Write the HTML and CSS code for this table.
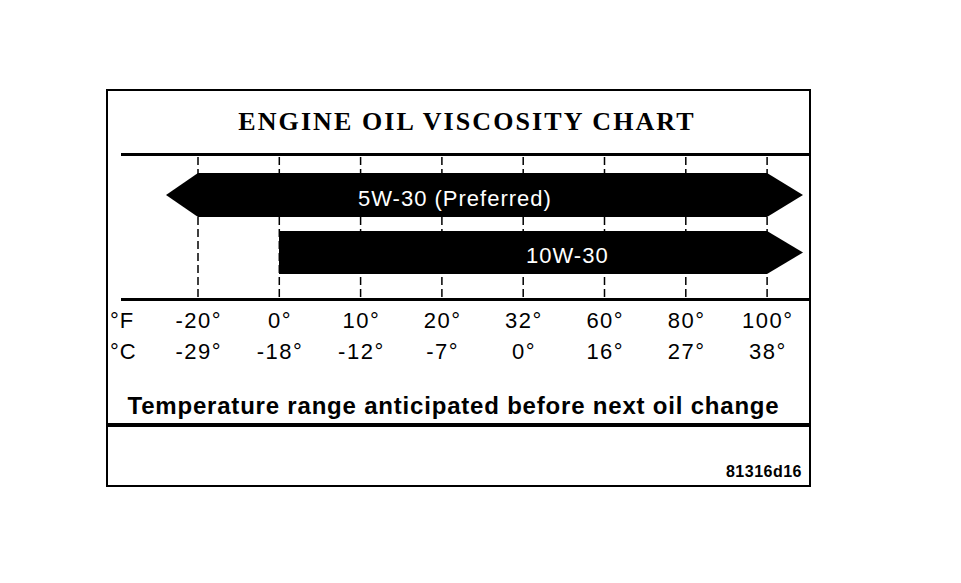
FILE: index.html
```html
<!DOCTYPE html>
<html lang="en">
<head>
<meta charset="utf-8">
<title>Engine Oil Viscosity Chart</title>
<link rel="stylesheet" href="styles.css">
</head>
<body>
<div class="chart">
  <h1 class="title">ENGINE OIL VISCOSITY CHART</h1>
  <div class="rule"></div>
  <svg class="bars" width="701" height="142" viewBox="0 0 701 142" xmlns="http://www.w3.org/2000/svg">
    <g class="ticks">
      <line x1="90" y1="1" x2="90" y2="142"/>
      <line x1="171.3" y1="1" x2="171.3" y2="142"/>
      <line x1="252.6" y1="1" x2="252.6" y2="142"/>
      <line x1="333.9" y1="1" x2="333.9" y2="142"/>
      <line x1="415.2" y1="1" x2="415.2" y2="142"/>
      <line x1="496.5" y1="1" x2="496.5" y2="142"/>
      <line x1="577.8" y1="1" x2="577.8" y2="142"/>
      <line x1="659.1" y1="1" x2="659.1" y2="142"/>
    </g>
    <polygon class="bar" points="58,39 90,17 659,17 695,39 659,61 90,61"/>
    <polygon class="bar" points="171,75 659,75 695,96.5 659,118 171,118"/>
    <text class="bar-label" x="250" y="50">5W-30 (Preferred)</text>
    <text class="bar-label" x="418" y="107">10W-30</text>
  </svg>
  <div class="rule"></div>
  <div class="scale">
    <div class="unit">°F</div>
    <div class="val">-20°</div>
    <div class="val">0°</div>
    <div class="val">10°</div>
    <div class="val">20°</div>
    <div class="val">32°</div>
    <div class="val">60°</div>
    <div class="val">80°</div>
    <div class="val">100°</div>
    <div class="unit">°C</div>
    <div class="val">-29°</div>
    <div class="val">-18°</div>
    <div class="val">-12°</div>
    <div class="val">-7°</div>
    <div class="val">0°</div>
    <div class="val">16°</div>
    <div class="val">27°</div>
    <div class="val">38°</div>
  </div>
  <p class="caption">Temperature range anticipated before next oil change</p>
  <div class="thick-rule"></div>
  <p class="code">81316d16</p>
</div>
</body>
</html>
```
FILE: styles.css
```css
html, body {
  margin: 0;
  padding: 0;
  background: #ffffff;
}

body {
  font-family: "Liberation Sans", Arial, sans-serif;
  color: #000;
}

.chart {
  box-sizing: content-box;
  width: 701px;
  margin: 89px 0 0 106px;
  border: 2px solid #000;
  padding-bottom: 3px;
}

.title {
  margin: 0;
  height: 26px;
  padding: 18px 0 18px 17px;
  font-family: "Liberation Serif", "Times New Roman", serif;
  font-weight: bold;
  font-size: 26px;
  line-height: 26px;
  letter-spacing: 2.1px;
  text-align: center;
  white-space: nowrap;
}

.rule {
  height: 3px;
  margin-left: 13px;
  background: #000;
}

.bars {
  display: block;
}

.ticks line {
  stroke: #000;
  stroke-width: 1.5;
  stroke-dasharray: 8 4;
}

.bar {
  fill: #000;
}

.bar-label {
  font-family: "Liberation Sans", Arial, sans-serif;
  font-size: 22px;
  letter-spacing: 1px;
  fill: #fff;
}

.scale {
  display: grid;
  grid-template-columns: 49.4px repeat(8, 81.3px);
  margin-top: 4px;
  font-size: 22px;
  line-height: 31px;
}

.unit {
  padding-left: 2px;
  letter-spacing: 1px;
}

.val {
  text-align: center;
  letter-spacing: 1.5px;
  padding-left: 1.5px;
  white-space: nowrap;
}

.caption {
  margin: 26px 10px 0 0;
  font-family: "Liberation Sans", Arial, sans-serif;
  font-weight: bold;
  font-size: 24px;
  line-height: 26px;
  letter-spacing: 0.8px;
  text-align: center;
  white-space: nowrap;
}

.thick-rule {
  height: 4px;
  margin-top: 4px;
  background: #000;
}

.code {
  margin: 35px 0 0 0;
  padding-right: 7px;
  font-family: "Liberation Sans", Arial, sans-serif;
  font-weight: bold;
  font-size: 16px;
  line-height: 20px;
  letter-spacing: 0.5px;
  text-align: right;
}
```
